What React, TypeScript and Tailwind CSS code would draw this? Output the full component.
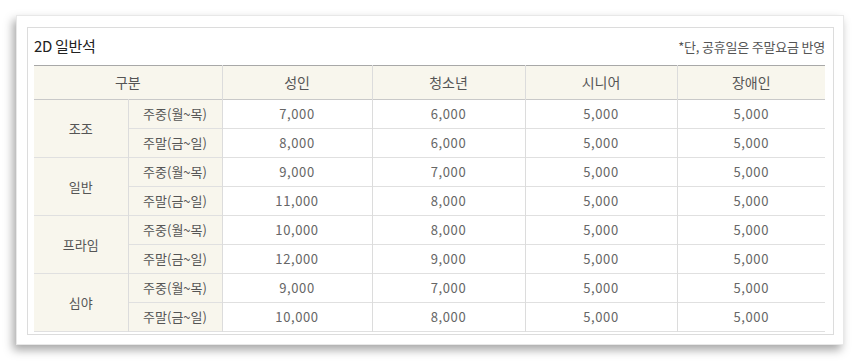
const rows = [
  { name: "조조", prices: [["7,000", "6,000", "5,000", "5,000"], ["8,000", "6,000", "5,000", "5,000"]] },
  { name: "일반", prices: [["9,000", "7,000", "5,000", "5,000"], ["11,000", "8,000", "5,000", "5,000"]] },
  { name: "프라임", prices: [["10,000", "8,000", "5,000", "5,000"], ["12,000", "9,000", "5,000", "5,000"]] },
  { name: "심야", prices: [["9,000", "7,000", "5,000", "5,000"], ["10,000", "8,000", "5,000", "5,000"]] },
];

const days = ["주중(월~목)", "주말(금~일)"];
const heads = ["성인", "청소년", "시니어", "장애인"];

const App = () => {
  return (
    <div
      className="w-[860px] h-[361px] bg-white pt-[15px] pl-[16px]"
      style={{ fontFamily: '"Noto Sans CJK KR", "Noto Sans", sans-serif' }}
    >
      <div className="w-[828px] h-[330px] bg-white border border-[#e8e8e8] shadow-[-3px_5px_9px_rgba(0,0,0,0.35)] pt-[11px] pl-[10px] pr-[9px] pb-[10px]">
        <div className="h-[308px] border border-[#dcdcdc] pl-[6px] pr-[8px]">
          <div className="h-[37px] flex items-center justify-between">
            <h2 className="text-[15px] text-[#222] tracking-[-0.3px]">2D 일반석</h2>
            <p className="text-[13px] text-[#555] tracking-[-0.2px]">*단, 공휴일은 주말요금 반영</p>
          </div>
          <table className="w-[791px] table-fixed border-collapse text-[13px] text-[#666]">
            <colgroup>
              <col className="w-[94px]" />
              <col className="w-[94px]" />
              <col className="w-[150px]" />
              <col className="w-[153px]" />
              <col className="w-[152px]" />
              <col className="w-[148px]" />
            </colgroup>
            <thead>
              <tr className="h-[34px] bg-[#f8f6ed] border-t border-t-[#a8a8a8] border-b border-b-[#c9c9c9]">
                <th colSpan={2} className="font-normal text-[14px] text-[#555] border-r border-[#dcdcdc]">구분</th>
                {heads.map((h, i) => (
                  <th key={h} className={`font-normal text-[14px] text-[#555] ${i < 3 ? "border-r border-[#dcdcdc]" : ""}`}>
                    {h}
                  </th>
                ))}
              </tr>
            </thead>
            <tbody>
              {rows.map((r) =>
                r.prices.map((p, j) => (
                  <tr key={r.name + j} className="h-[29px] border-b border-[#e0e0e0]">
                    {j === 0 && (
                      <td rowSpan={2} className="bg-[#f8f6ed] text-center border-r border-[#dcdcdc] text-[#555]">
                        {r.name}
                      </td>
                    )}
                    <td className="bg-[#f8f6ed] text-center border-r border-[#dcdcdc] text-[#555]">{days[j]}</td>
                    {p.map((v, k) => (
                      <td key={k} className={`text-center tracking-[0.6px] ${k < 3 ? "border-r border-[#dcdcdc]" : ""}`}>
                        {v}
                      </td>
                    ))}
                  </tr>
                ))
              )}
            </tbody>
          </table>
        </div>
      </div>
    </div>
  );
};

export default App;
